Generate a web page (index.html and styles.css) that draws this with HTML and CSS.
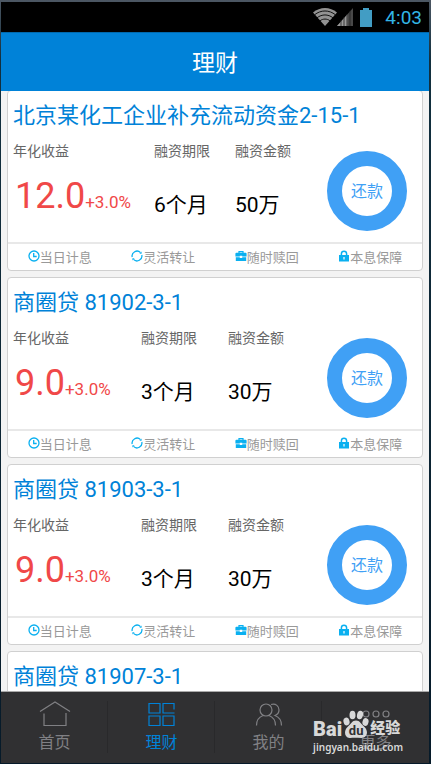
FILE: index.html
```
<!DOCTYPE html>
<html lang="zh-CN">
<head>
    <meta charset="UTF-8">
    <meta name="viewport" content="width=device-width, initial-scale=1">
    <title>理财</title>
    <link rel="stylesheet" href="styles.css">
</head>
<body>
    <!-- shared icons -->
    <svg class="sprite" aria-hidden="true">
        <symbol id="icon-clock" viewBox="0 0 12 12">
            <circle cx="6" cy="6" r="5" fill="none" stroke="currentColor" stroke-width="1.3"/>
            <path d="M5.7 3v3.5h3" fill="none" stroke="currentColor" stroke-width="1.3"/>
        </symbol>
        <symbol id="icon-cycle" viewBox="0 0 12 12">
            <path d="M1.2 7A4.900 4.900 0 0 1 9.500 2.600M10.800 5A4.900 4.900 0 0 1 2.500 9.400" fill="none" stroke="currentColor" stroke-width="1.3"/>
            <path d="M10.600 1.600v2.200H8.400zM1.400 10.400V8.200h2.200z" fill="currentColor"/>
        </symbol>
        <symbol id="icon-case" viewBox="0 0 12 12">
            <path d="M4 3.4V1.6h4v1.8" fill="none" stroke="currentColor" stroke-width="1.2"/>
            <path d="M1.400 2.800h9.200a1 1 0 0 1 1 1v2.700H7.2v-.8H4.8v.8H.4V3.800a1 1 0 0 1 1-1zM.8 7.200h4V8h2.400v-.8h4v3.800H.8z" fill="currentColor"/>
        </symbol>
        <symbol id="icon-lock" viewBox="0 0 12 12">
            <path d="M3.4 5.5V3.8a2.6 2.6 0 0 1 5.2 0v1.7" fill="none" stroke="currentColor" stroke-width="1.5"/>
            <path d="M1 5h10v6.500H1zM5.4 7v2.4h1.2V7z" fill="currentColor" fill-rule="evenodd"/>
        </symbol>
    </svg>

    <div class="status-bar">
        <svg class="wifi" viewBox="0 0 24 18">
            <path d="M0 4.500C7-1.500 17-1.500 24 4.500L12 18z" fill="#929292"/>
            <path d="M1.500 6.800C8 1.700 16 1.700 22.500 6.800M4 9.800C9 6 15 6 20 9.800M7 12.800C10 10.500 14 10.500 17 12.800" fill="none" stroke="#111" stroke-width="1"/>
        </svg>
        <svg class="signal" viewBox="0 0 16 18">
            <path d="M0 18L16 0V18z" fill="#484848"/>
            <path d="M0 18L10.500 6.200V18z" fill="#999"/>
            <path d="M4 12v6M7 9v9M10 6v12M13 3v15" stroke="#222" stroke-width=".8"/>
        </svg>
        <svg class="battery" viewBox="0 0 12 19">
            <path d="M3 0h6v2h3v17H0V2h3z" fill="#429dc4"/>
        </svg>
        <span class="time">4:03</span>
    </div>

    <header class="header">
        <h1>理财</h1>
    </header>

    <main class="list">
        <section class="card">
            <h2>北京某化工企业补充流动资金2-15-1</h2>
            <div class="card-body wide">
                <div class="rate">
                    <div class="label">年化收益</div>
                    <div class="rate-value">12.0<small>+3.0%</small></div>
                </div>
                <div>
                    <div class="label">融资期限</div>
                    <div class="value">6个月</div>
                </div>
                <div>
                    <div class="label">融资金额</div>
                    <div class="value">50万</div>
                </div>
                <button type="button" class="ring">还款</button>
            </div>
            <div class="features">
                <span><svg><use href="#icon-clock"/></svg>当日计息</span>
                <span><svg><use href="#icon-cycle"/></svg>灵活转让</span>
                <span><svg><use href="#icon-case"/></svg>随时赎回</span>
                <span><svg><use href="#icon-lock"/></svg>本息保障</span>
            </div>
        </section>

        <section class="card">
            <h2>商圈贷 81902-3-1</h2>
            <div class="card-body">
                <div class="rate">
                    <div class="label">年化收益</div>
                    <div class="rate-value">9.0<small>+3.0%</small></div>
                </div>
                <div>
                    <div class="label">融资期限</div>
                    <div class="value">3个月</div>
                </div>
                <div>
                    <div class="label">融资金额</div>
                    <div class="value">30万</div>
                </div>
                <button type="button" class="ring">还款</button>
            </div>
            <div class="features">
                <span><svg><use href="#icon-clock"/></svg>当日计息</span>
                <span><svg><use href="#icon-cycle"/></svg>灵活转让</span>
                <span><svg><use href="#icon-case"/></svg>随时赎回</span>
                <span><svg><use href="#icon-lock"/></svg>本息保障</span>
            </div>
        </section>

        <section class="card">
            <h2>商圈贷 81903-3-1</h2>
            <div class="card-body">
                <div class="rate">
                    <div class="label">年化收益</div>
                    <div class="rate-value">9.0<small>+3.0%</small></div>
                </div>
                <div>
                    <div class="label">融资期限</div>
                    <div class="value">3个月</div>
                </div>
                <div>
                    <div class="label">融资金额</div>
                    <div class="value">30万</div>
                </div>
                <button type="button" class="ring">还款</button>
            </div>
            <div class="features">
                <span><svg><use href="#icon-clock"/></svg>当日计息</span>
                <span><svg><use href="#icon-cycle"/></svg>灵活转让</span>
                <span><svg><use href="#icon-case"/></svg>随时赎回</span>
                <span><svg><use href="#icon-lock"/></svg>本息保障</span>
            </div>
        </section>

        <section class="card">
            <h2>商圈贷 81907-3-1</h2>
        </section>
    </main>

    <nav class="tabs">
        <a href="#home">
            <svg viewBox="0 0 32 26"><path d="M1 10.500L16 1L31 10.500M5 12.500V24.500H27V12" /></svg>
            首页
        </a>
        <a href="#finance" class="active">
            <svg viewBox="0 0 32 26"><path d="M28 8.500V2.500H17V12H28.500M3 2.500H14V12H3zM3 15H14V24.500H3zM17 15H28V24.500H17z"/></svg>
            理财
        </a>
        <a href="#mine">
            <svg viewBox="0 0 32 26"><circle cx="13" cy="9" r="6"/><path d="M3.500 24.500C3.500 19 6 16 10 14.500M16 14.500C20 16 22.500 19 22.500 24.500M18 3.500C23 2 26 5.500 26 9C26 11.500 24.500 13.500 22 14.500C26 16 28.500 19 28.500 24.500"/></svg>
            我的
        </a>
        <a href="#more">
            <svg viewBox="0 0 32 26"><circle cx="6" cy="13" r="3"/><circle cx="16" cy="13" r="3"/><circle cx="26" cy="13" r="3"/></svg>
            更多
        </a>
    </nav>

    <div class="watermark">
        <div class="brand">
            <span class="bai">Bai</span>
            <span class="paw">
                <svg viewBox="0 0 26 28">
                    <g fill="#d8d8d8">
                        <ellipse cx="3.500" cy="11.500" rx="3" ry="4" transform="rotate(-15 3.500 11.500)"/>
                        <ellipse cx="9.500" cy="5" rx="3" ry="4.300"/>
                        <ellipse cx="17" cy="5" rx="3" ry="4.300" transform="rotate(12 17 5)"/>
                        <ellipse cx="22.500" cy="12" rx="3" ry="4" transform="rotate(15 22.500 12)"/>
                        <path d="M13 10.500C17 10.500 18 14 21.500 17C26 21.500 24 28 18.500 28C15 28 11 27.500 7.500 28C2 28.500 0 21.500 4.500 17C8 14 9 10.500 13 10.500z"/>
                    </g>
                </svg>
                <b>du</b>
            </span>
            <span class="exp">经验</span>
        </div>
        <div class="site">jingyan.baidu.com</div>
    </div>
</body>
</html>
```
FILE: styles.css
```
* {
    box-sizing: border-box;
}

body {
    margin: 0;
    height: 100vh;
    padding: 2px 2px 1px 1px;
    display: flex;
    flex-direction: column;
    position: relative;
    overflow: hidden;
    background: linear-gradient(#4c5763, #12303f 60px, #061a29);
    font-family: Roboto, "Noto Sans CJK SC", sans-serif;
    color: #000;
}

.sprite {
    display: none;
}

.status-bar {
    flex: none;
    height: 30px;
    padding-right: 7px;
    display: flex;
    align-items: center;
    justify-content: flex-end;
    background: #000;
}

.wifi {
    width: 24px;
    height: 18px;
}

.signal {
    width: 16px;
    height: 18px;
}

.battery {
    width: 12px;
    height: 19px;
    margin: 0 13px 0 7px;
}

.time {
    font-size: 19px;
    color: #33b5e5;
}

.header {
    flex: none;
    height: 59px;
    padding-top: 3px;
    position: relative;
    z-index: 1;
    display: flex;
    align-items: center;
    justify-content: center;
    background: #0082d8;
    border-top: 1px solid #0069ae;
}

.header h1 {
    margin: 0;
    font-size: 23px;
    line-height: 32px;
    font-weight: 400;
    color: #fff;
}

.list {
    flex: 1;
    min-height: 0;
    margin-top: -1px;
    padding: 0 6px;
    overflow: hidden;
    background: #f3f3f3;
}

.card {
    height: 181px;
    margin-bottom: 6px;
    display: flex;
    flex-direction: column;
    background: #fff;
    border: 1px solid #d0d0d0;
    border-radius: 4px;
}

.card h2 {
    margin: 0;
    padding: 9px 5px 0;
    font-size: 22px;
    line-height: 32px;
    font-weight: 400;
    color: #0082d8;
    white-space: nowrap;
}

.card-body {
    flex: 1;
    padding: 9px 15px 0 5px;
    display: grid;
    grid-template-columns: 128px 87px 1fr auto;
}

.card-body.wide {
    grid-template-columns: 141px 81px 1fr auto;
}

.label {
    font-size: 14px;
    line-height: 20px;
    color: #666;
}

.rate-value {
    padding: 14px 0 0 2px;
    font-size: 36px;
    line-height: 42px;
    color: #f04848;
}

.rate-value small {
    font-size: 17px;
}

.value {
    padding-top: 28px;
    font-size: 21px;
    line-height: 32px;
}

.ring {
    width: 80px;
    height: 80px;
    margin-top: 10px;
    padding: 0 0 2px;
    border: 15px solid #40a0f5;
    border-radius: 50%;
    background: #fff;
    font-family: inherit;
    font-size: 16px;
    color: #40a0f5;
}

.features {
    height: 28px;
    padding-bottom: 2px;
    display: flex;
    border-top: 2px solid #e8e8e8;
    font-size: 13px;
    color: #999;
}

.features span {
    flex: 1;
    display: flex;
    align-items: center;
    justify-content: center;
}

.features svg {
    width: 12px;
    height: 12px;
    color: #0ab0f0;
}

.tabs {
    flex: none;
    height: 72px;
    display: flex;
    background: #303032;
    border-top: 1px solid #aaa;
}

.tabs a {
    flex: 1;
    display: flex;
    flex-direction: column;
    align-items: center;
    padding-top: 9px;
    font-size: 16px;
    line-height: 32px;
    color: #808084;
    text-decoration: none;
    background: linear-gradient(#29292b, #29292b) right 9px / 1px 52px no-repeat;
}

.tabs a:last-child {
    background: none;
}

.tabs svg {
    width: 32px;
    height: 26px;
    fill: none;
    stroke: currentColor;
    stroke-width: 1.2;
}

.tabs .active {
    color: #0082d8;
}

/* site mark over the bottom right corner */
.watermark {
    position: absolute;
    right: 28px;
    bottom: 10px;
    color: #d8d8d8;
    pointer-events: none;
}

.brand {
    height: 30px;
    display: flex;
    align-items: flex-end;
}

.bai {
    font-size: 20px;
    line-height: 22px;
    font-weight: 900;
}

.paw {
    position: relative;
    width: 26px;
    height: 28px;
    margin: 0 0 2px 1px;
}

.paw svg {
    width: 26px;
    height: 28px;
    display: block;
}

.paw b {
    position: absolute;
    left: 0;
    right: 0;
    bottom: 0;
    font-size: 13px;
    line-height: 14px;
    text-align: center;
    color: #303032;
}

.exp {
    margin-left: 1px;
    font-size: 15px;
    line-height: 24px;
    font-weight: 900;
}

.site {
    font-family: "Noto Sans", sans-serif;
    font-size: 10px;
    line-height: 14px;
    font-weight: 600;
}
```
